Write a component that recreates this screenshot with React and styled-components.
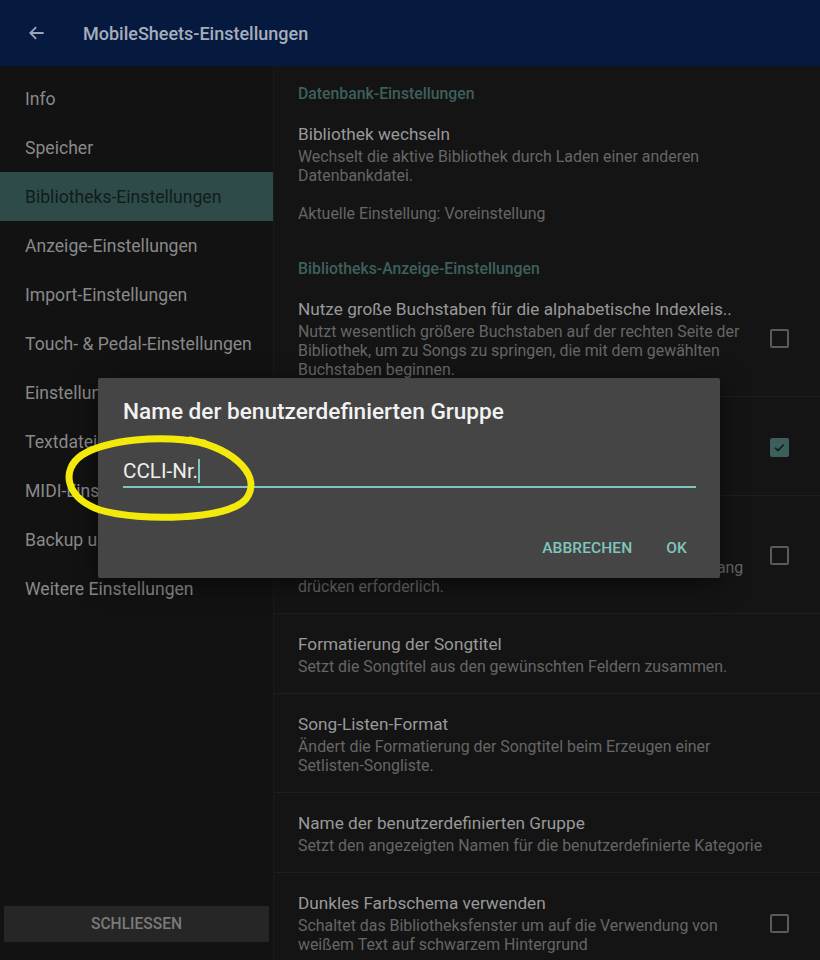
import React from 'react';
import styled, { createGlobalStyle } from 'styled-components';

const GlobalStyle = createGlobalStyle`
  html, body {
    margin: 0;
    padding: 0;
    background: #131313;
    overflow: hidden;
  }
  * { box-sizing: border-box; }
`;

const Page = styled.div`
  position: relative;
  width: 820px;
  height: 960px;
  display: flex;
  flex-direction: column;
  font-family: Roboto, "Noto Sans", sans-serif;
  background: #131313;
  overflow: hidden;
`;

const AppBar = styled.header`
  height: 66px;
  flex-shrink: 0;
  display: flex;
  align-items: center;
  gap: 36px;
  padding-left: 27px;
  background: #061a40;
`;

const BackButton = styled.span`
  display: flex;
  width: 20px;
  height: 20px;
  color: #9ca4b5;
`;

const AppTitle = styled.h1`
  margin: 0;
  font-size: 18px;
  font-weight: 500;
  color: #a6adbb;
`;

const Body = styled.div`
  flex: 1;
  display: flex;
  min-height: 0;
`;

const Sidebar = styled.nav`
  width: 274px;
  flex-shrink: 0;
  display: flex;
  flex-direction: column;
  justify-content: space-between;
  background: #121212;
  border-right: 1px solid #1a1a1a;
  padding: 8px 0 18px;
`;

const NavList = styled.div`
  display: flex;
  flex-direction: column;
`;

const NavItem = styled.div`
  height: 49px;
  display: flex;
  align-items: center;
  padding-left: 25px;
  font-size: 17.6px;
  white-space: nowrap;
  color: ${(p) => (p.$active ? '#0f1d1c' : '#898989')};
  background: ${(p) => (p.$active ? '#2f4b49' : 'transparent')};
`;

const CloseButton = styled.button`
  margin: 0 4px;
  height: 36px;
  border: none;
  border-radius: 1px;
  background: #262626;
  color: #7a7a7a;
  font-family: Roboto, sans-serif;
  font-size: 15.6px;
  font-weight: 500;
`;

const Content = styled.main`
  flex: 1;
  display: flex;
  flex-direction: column;
  background: #141414;
  overflow: hidden;
`;

const SectionHeader = styled.div`
  padding: ${(p) => (p.$first ? '18px' : '19px')} 24px 0;
  line-height: 20px;
  font-size: 15.8px;
  font-weight: 500;
  color: #3d605c;
`;

const Item = styled.div`
  display: flex;
  align-items: center;
  padding: 19px 0 17px 24px;
  flex-shrink: 0;
  & + & {
    border-top: 1px solid #1e1e1e;
  }
`;

const ItemText = styled.div`
  flex: 1;
  min-width: 0;
`;

const ItemTitle = styled.div`
  line-height: 22px;
  font-size: 17.2px;
  color: #999999;
  white-space: nowrap;
`;

const Summary = styled.div`
  margin-top: 2px;
  font-size: 15.9px;
  line-height: 19px;
  color: #666666;
`;

const SummaryLine = styled.div`
  min-height: 19px;
  white-space: nowrap;
`;

const CheckCell = styled.div`
  width: 82px;
  flex-shrink: 0;
  display: flex;
  justify-content: center;
`;

const Box = styled.span`
  width: 19px;
  height: 19px;
  border-radius: 2px;
  display: flex;
  align-items: center;
  justify-content: center;
  border: 2px solid ${(p) => (p.$checked ? '#3c5f5c' : '#5a5a5a')};
  background: ${(p) => (p.$checked ? '#3c5f5c' : 'transparent')};
`;

const Dialog = styled.div`
  position: absolute;
  left: 98px;
  top: 378px;
  width: 622px;
  height: 200px;
  background: #454545;
  border-radius: 2px;
  box-shadow: 0 6px 24px rgba(0, 0, 0, 0.5);
  padding: 21px 24px 0 25px;
  display: flex;
  flex-direction: column;
`;

const DialogTitle = styled.h2`
  margin: 0;
  font-size: 22.6px;
  line-height: 26px;
  font-weight: 500;
  color: #f2f2f2;
`;

const InputRow = styled.div`
  margin-top: 31px;
  height: 32px;
  display: flex;
  align-items: center;
  border-bottom: 2px solid #7fc6bf;
  font-size: 20.6px;
  color: #ededed;
`;

const Caret = styled.span`
  display: inline-block;
  width: 2px;
  height: 24px;
  background: #7fc6bf;
`;

const Actions = styled.div`
  margin-top: 50px;
  line-height: 20px;
  display: flex;
  justify-content: flex-end;
  gap: 34px;
  padding-right: 9px;
`;

const ActionButton = styled.span`
  font-size: 15.5px;
  font-weight: 500;
  color: #7fc6bf;
  letter-spacing: 0.1px;
`;

const Annotation = styled.svg`
  position: absolute;
  left: 0;
  top: 0;
  pointer-events: none;
`;

const navItems = [
  'Info',
  'Speicher',
  'Bibliotheks-Einstellungen',
  'Anzeige-Einstellungen',
  'Import-Einstellungen',
  'Touch- & Pedal-Einstellungen',
  'Einstellungen für Setlisten',
  'Textdatei-Einstellungen',
  'MIDI-Einstellungen',
  'Backup und Wiederherstellung',
  'Weitere Einstellungen',
];

const displayItems = [
  {
    title: 'Nutze große Buchstaben für die alphabetische Indexleis..',
    lines: [
      'Nutzt wesentlich größere Buchstaben auf der rechten Seite der',
      'Bibliothek, um zu Songs zu springen, die mit dem gewählten',
      'Buchstaben beginnen.',
    ],
    check: false,
  },
  {
    title: 'Songs farblich hervorheben',
    lines: ['Hebt Songs abhängig von ihrer', 'Farbzuordnung hervor.'],
    check: true,
  },
  {
    title: 'Langes Drücken für das Kontextmenü',
    lines: [
      'Zum Öffnen des Kontextmenüs eines Songs ist',
      'in der Bibliothek statt eines kurzen Antippens ein sekundenlang',
      'drücken erforderlich.',
    ],
    check: false,
  },
  {
    title: 'Formatierung der Songtitel',
    lines: ['Setzt die Songtitel aus den gewünschten Feldern zusammen.'],
  },
  {
    title: 'Song-Listen-Format',
    lines: [
      'Ändert die Formatierung der Songtitel beim Erzeugen einer',
      'Setlisten-Songliste.',
    ],
  },
  {
    title: 'Name der benutzerdefinierten Gruppe',
    lines: ['Setzt den angezeigten Namen für die benutzerdefinierte Kategorie'],
  },
  {
    title: 'Dunkles Farbschema verwenden',
    lines: [
      'Schaltet das Bibliotheksfenster um auf die Verwendung von',
      'weißem Text auf schwarzem Hintergrund',
    ],
    check: false,
  },
];

const Checkbox = ({ checked }) => (
  <Box $checked={checked}>
    {checked && (
      <svg width="13" height="13" viewBox="0 0 24 24">
        <path d="M4 12.5l5 5L20 6.5" fill="none" stroke="#0f1c1b" strokeWidth="3" />
      </svg>
    )}
  </Box>
);

const Preference = ({ title, lines, check }) => (
  <Item>
    <ItemText>
      <ItemTitle>{title}</ItemTitle>
      <Summary>
        {lines.map((line, i) => (
          <SummaryLine key={i}>{line}</SummaryLine>
        ))}
      </Summary>
    </ItemText>
    {check !== undefined && (
      <CheckCell>
        <Checkbox checked={check} />
      </CheckCell>
    )}
  </Item>
);

export default function App() {
  return (
    <Page>
      <GlobalStyle />
      <AppBar>
        <BackButton>
          <svg width="20" height="20" viewBox="0 0 24 24">
            <path d="M20 12H4.5M11 5l-7 7 7 7" fill="none" stroke="currentColor" strokeWidth="2.2" />
          </svg>
        </BackButton>
        <AppTitle>MobileSheets-Einstellungen</AppTitle>
      </AppBar>
      <Body>
        <Sidebar>
          <NavList>
            {navItems.map((label) => (
              <NavItem key={label} $active={label === 'Bibliotheks-Einstellungen'}>
                {label}
              </NavItem>
            ))}
          </NavList>
          <CloseButton>SCHLIESSEN</CloseButton>
        </Sidebar>
        <Content>
          <SectionHeader $first>Datenbank-Einstellungen</SectionHeader>
          <Preference
            title="Bibliothek wechseln"
            lines={[
              'Wechselt die aktive Bibliothek durch Laden einer anderen',
              'Datenbankdatei.',
              '',
              'Aktuelle Einstellung: Voreinstellung',
            ]}
          />
          <SectionHeader>Bibliotheks-Anzeige-Einstellungen</SectionHeader>
          {displayItems.map((it) => (
            <Preference key={it.title} {...it} />
          ))}
        </Content>
      </Body>

      <Dialog>
        <DialogTitle>Name der benutzerdefinierten Gruppe</DialogTitle>
        <InputRow>
          CCLI-Nr.
          <Caret />
        </InputRow>
        <Actions>
          <ActionButton>ABBRECHEN</ActionButton>
          <ActionButton>OK</ActionButton>
        </Actions>
      </Dialog>

      <Annotation width="820" height="960" viewBox="0 0 820 960">
        <path
          d="M190 440 C238 450, 262 478, 246 499 C228 520, 140 522, 100 510 C66 498, 60 470, 82 455 C106 440, 160 434, 204 443"
          fill="none"
          stroke="#f3ea0c"
          strokeWidth="7"
          strokeLinecap="round"
          strokeLinejoin="round"
        />
      </Annotation>
    </Page>
  );
}
